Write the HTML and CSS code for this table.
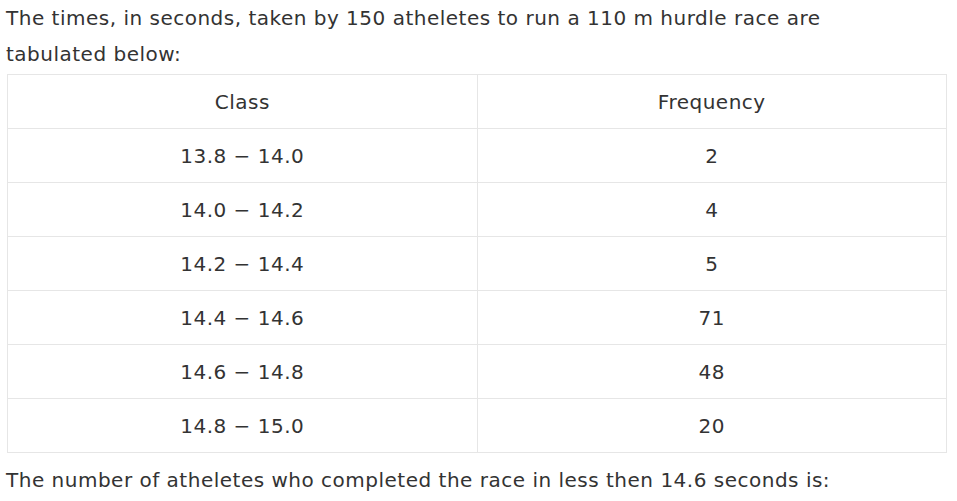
FILE: index.html
```html
<!DOCTYPE html>
<html>
<head>
<meta charset="utf-8">
<link rel="stylesheet" href="styles.css">
</head>
<body>
<div class="question">
  <p class="text">The times, in seconds, taken by 150 atheletes to run a 110 m hurdle race are tabulated below:</p>
  <table class="data">
    <thead>
      <tr><th>Class</th><th>Frequency</th></tr>
    </thead>
    <tbody>
      <tr><td>13.8 − 14.0</td><td>2</td></tr>
      <tr><td>14.0 − 14.2</td><td>4</td></tr>
      <tr><td>14.2 − 14.4</td><td>5</td></tr>
      <tr><td>14.4 − 14.6</td><td>71</td></tr>
      <tr><td>14.6 − 14.8</td><td>48</td></tr>
      <tr><td>14.8 − 15.0</td><td>20</td></tr>
    </tbody>
  </table>
  <p class="text after">The number of atheletes who completed the race in less then 14.6 seconds is:</p>
</div>
</body>
</html>
```

FILE: styles.css
```css
html, body {
  margin: 0;
  padding: 0;
  background: #fff;
}
.question {
  padding: 0 6px;
  font-family: "DejaVu Sans", sans-serif;
  font-size: 20px;
  letter-spacing: 0.5px;
  color: #333;
}
.text {
  margin: 0;
  line-height: 36px;
  width: 840px;
}
.data {
  margin: 2px 0 0 1px;
  width: 940px;
  border-collapse: collapse;
  table-layout: fixed;
}
.data th, .data td {
  border: 1px solid #e6e6e6;
  height: 53px;
  padding: 0;
  text-align: center;
  font-weight: normal;
  font-size: 20px;
}
.after {
  margin-top: 9px;
}
```
